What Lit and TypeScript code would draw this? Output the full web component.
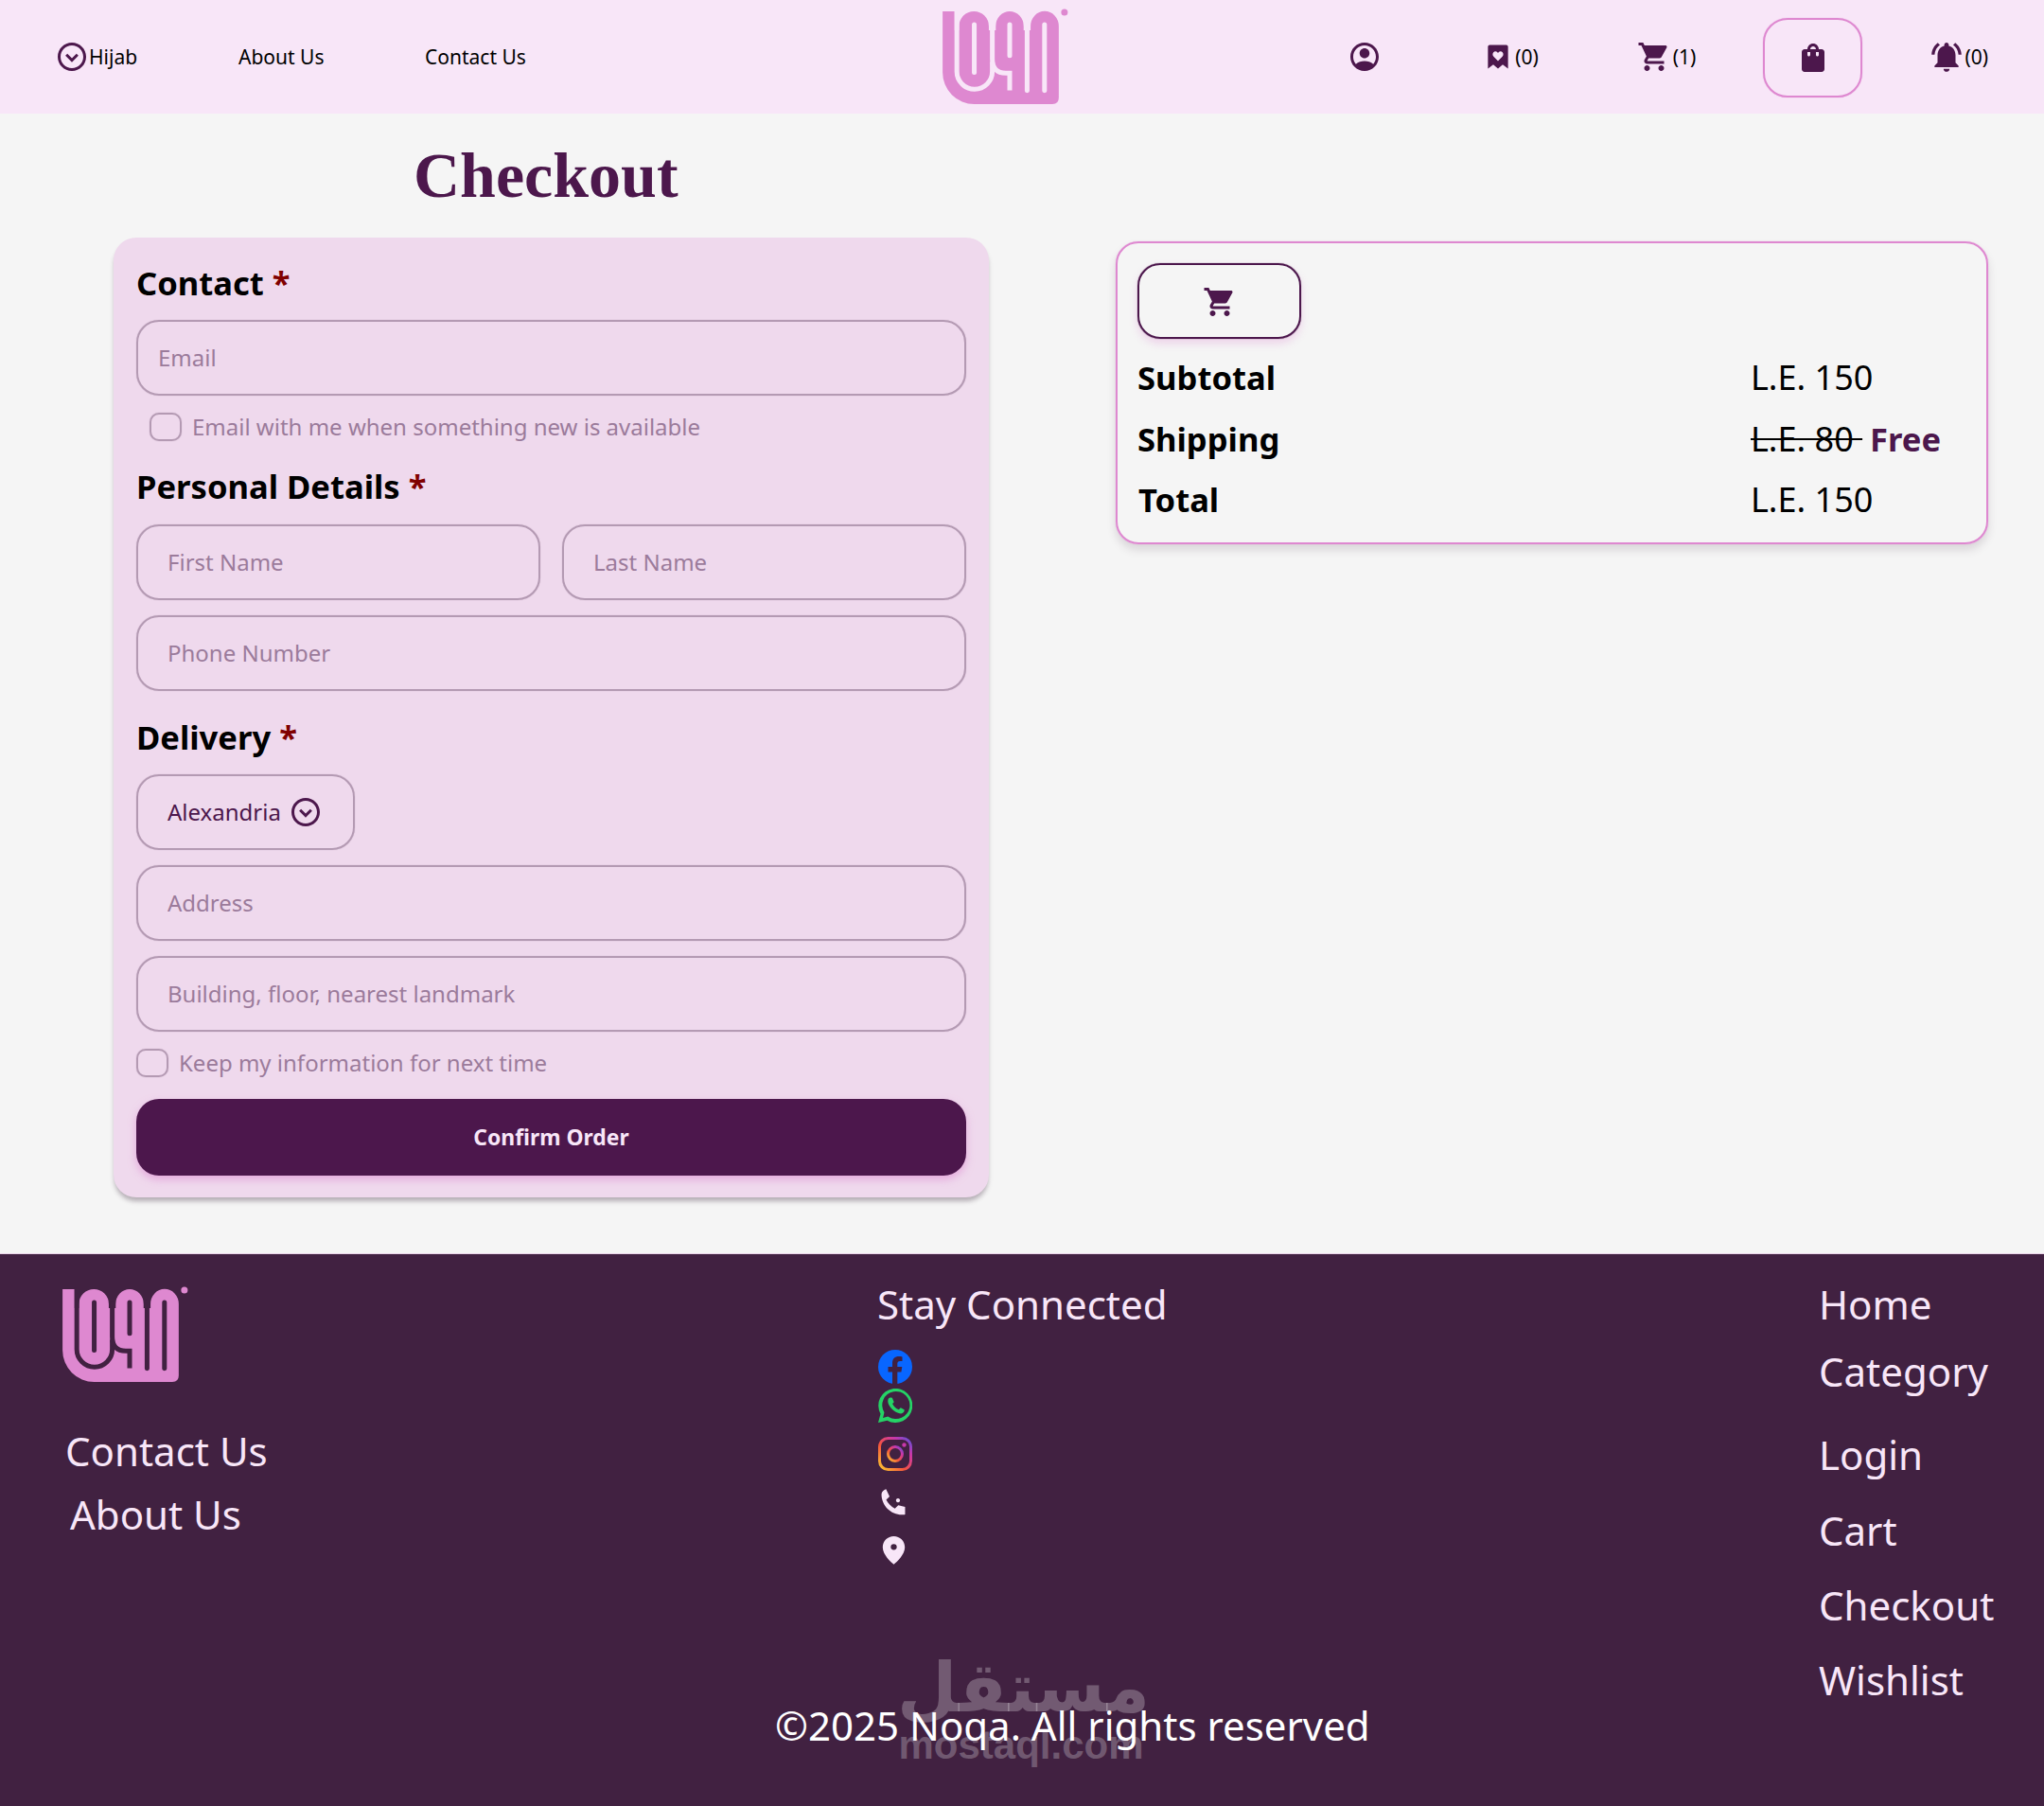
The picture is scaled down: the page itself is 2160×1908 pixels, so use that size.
import { LitElement, html, css, svg } from "lit";
import { customElement } from "lit/decorators.js";

const P = {
  cart: "M7 18c-1.1 0-1.99.9-1.99 2S5.9 22 7 22s2-.9 2-2-.9-2-2-2zM1 2v2h2l3.6 7.59-1.35 2.45c-.16.28-.25.61-.25.96 0 1.1.9 2 2 2h12v-2H7.42c-.14 0-.25-.11-.25-.25l.03-.12.9-1.63h7.45c.75 0 1.41-.41 1.75-1.03l3.58-6.49c.08-.14.12-.31.12-.48 0-.55-.45-1-1-1H5.21l-.94-2H1zm16 16c-1.1 0-1.99.9-1.99 2s.89 2 1.99 2 2-.9 2-2-.9-2-2-2z",
  bag: "M18 6h-2c0-2.21-1.79-4-4-4S8 3.79 8 6H6c-1.1 0-2 .9-2 2v12c0 1.1.9 2 2 2h12c1.1 0 2-.9 2-2V8c0-1.1-.9-2-2-2zm-8 4c0 .55-.45 1-1 1s-1-.45-1-1V8h2v2zm2-6c1.1 0 2 .9 2 2h-4c0-1.1.9-2 2-2zm4 6c0 .55-.45 1-1 1s-1-.45-1-1V8h2v2z",
  bell: "M7.58 4.08L6.15 2.65C3.75 4.48 2.17 7.3 2.03 10.5h2c.15-2.65 1.51-4.97 3.55-6.42zm12.39 6.42h2c-.15-3.2-1.73-6.02-4.12-7.85l-1.42 1.43c2.02 1.45 3.39 3.77 3.54 6.42zM18 11c0-3.07-1.64-5.64-4.5-6.32V4c0-.83-.67-1.5-1.5-1.5s-1.5.67-1.5 1.5v.68C7.63 5.36 6 7.92 6 11v5l-2 2v1h16v-1l-2-2v-5zm-6 11c.14 0 .27-.01.4-.04.65-.14 1.18-.58 1.44-1.18.1-.24.15-.5.15-.78h-4c.01 1.1.9 2 2.01 2z",
  user: "M12 2C6.48 2 2 6.48 2 12s4.48 10 10 10 10-4.48 10-10S17.52 2 12 2zM12 4c4.42 0 8 3.58 8 8 0 1.95-.7 3.73-1.86 5.12C16.45 15.8 14.32 15 12 15s-4.45.8-6.14 2.12C4.7 15.73 4 13.95 4 12c0-4.42 3.58-8 8-8zm0 2c-1.93 0-3.5 1.57-3.5 3.5S10.07 13 12 13s3.5-1.57 3.5-3.5S13.93 6 12 6z",
  mark: "M5 2h14c.83 0 1.5.67 1.5 1.5V22L16 18.500 12 22l-4-3.500L3.500 22V3.500C3.500 2.670 4.170 2 5 2zM12 15.500l3.700-3.800c1-1.100 1-2.700.1-3.600-.9-.9-2.400-.85-3.300.1L12 8.700l-.5-.5c-.9-.95-2.400-1-3.300-.1-.9.9-.9 2.500.1 3.600z",
  down: "M12 2C6.48 2 2 6.48 2 12s4.48 10 10 10 10-4.48 10-10S17.52 2 12 2zm0 18c-4.41 0-8-3.59-8-8s3.59-8 8-8 8 3.59 8 8-3.59 8-8 8zm0-4.2l-4.6-4.6L8.8 9.8l3.2 3.2 3.2-3.2 1.4 1.4z",
  phone: "M6.600 1.500C5 2 3.200 3.300 3.200 5.400c0 8.300 6.900 15.200 15.200 15.200.8 0 1.900 0 2.400-.2V14.800l-5.100-1.300-2.500 2.500c-2.800-1.400-5.100-3.700-6.500-6.500L9.200 7zM15.500 8.500a1.500 1.500 0 1 0 .01 0z",
  pin: "M12 1.500C7.300 1.500 3.500 5.200 3.500 10c0 5.500 6.200 11.300 8.500 13 2.300-1.700 8.500-7.500 8.500-13 0-4.800-3.800-8.500-8.500-8.500zm0 10.500a2.300 2.300 0 1 1 0-4.600 2.300 2.300 0 0 1 0 4.600z",
  wa: "M2 22l1.400-5.200A10 10 0 1 1 7.300 20.700zM4.800 19.200l3-.8.400.2A8.100 8.100 0 1 0 5.600 16zM9 7.300c-.4 0-1.300.5-1.300 2 0 2.800 3.600 6.500 6.900 7.300 1.400.3 2.500-.6 2.700-1.400.1-.4.1-.8 0-.9l-2.100-1.100-1.100 1.200c-1.700-.6-3-1.900-3.700-3.500l.9-1-1-2.400c-.1-.1-.7-.2-1.300-.2z",
};
const icon = (d: string, size = 30) => html`<svg class="ic" width=${size} height=${size} viewBox="0 0 24 24" fill="currentColor" fill-rule="evenodd"><path d=${d}></path></svg>`;

const logo = () => html`<svg class="logo" width="134" height="98" viewBox="0 0 400 293">
  <path class="lg-fill" d="M0 0H38V60H52V47A47 47 0 0 1 146 47V60H168V47A44 47 0 0 1 256 47V60H278V47A44 47 0 0 1 367 47V273Q367 293 347 293H100A100 100 0 0 1 0 193Z"></path>
  <g class="lg-slot" fill="none" stroke-width="15" stroke-linecap="round">
    ${svg`<path stroke-linecap="butt" d="M45 -5V190A56 56 0 0 0 157 190V160"></path>
    <path stroke-linecap="butt" d="M157 40V150Q157 195 200 195H212V250"></path><path d="M100 42V193"></path><path d="M212 42V140"></path>
    <path d="M267 40V250"></path><path d="M322 42V250"></path>`}
  </g>
  <circle class="lg-fill" cx="385" cy="3" r="10.500"></circle>
</svg>`;

@customElement("app-root")
export class AppRoot extends LitElement {
  static styles = css`
    :host { display: block; width: 2160px; font-family: "Noto Sans", sans-serif; background: #f5f5f5; color: #000; }
    * { box-sizing: border-box; }
    .ic { display: block; flex: none; color: #4c174c; }
    .logo { overflow: visible; }
    .lg-fill { fill: #de88d0; }
    .lg-slot { stroke: var(--slot); }
    header { --slot: #f8e6f8; height: 120px; background: #f8e6f8; display: flex; align-items: center; padding-left: 61px; font-size: 21px; }
    .nav { display: flex; align-items: center; }
    .hijab { display: flex; align-items: center; gap: 3px; width: 191px; }
    .about { width: 197px; }
    header .logo { margin-left: 440px; margin-top: 2px; }
    .tools { margin-left: auto; margin-right: 59px; display: flex; align-items: center; font-size: 21px; }
    .tool { display: flex; align-items: center; gap: 3px; }
    .t1 { margin-right: 108px; }
    .t2 { margin-right: 104px; }
    .t3 { margin-right: 71px; gap: 2px; }
    .t4 { width: 105px; height: 84px; margin-top: 2px; border: 2px solid #de88d0; box-shadow: 0 0 1px #de88d0; border-radius: 26px; justify-content: center; margin-right: 70px; }
    .t5 { gap: 0; }
    main { display: flex; padding: 0 59px 59px 120px; gap: 134px; align-items: flex-start; }
    .left { width: 925px; flex: none; }
    h1 { margin: 25px 0 26px; padding-left: 317px; font: bold 68px/80px "Liberation Serif", serif; color: #4c174c; }
    .card { background: #efd9ed; border-radius: 24px; padding: 24px 24px 23px; box-shadow: 0 5px 5px -1px rgba(60, 40, 60, .35); }
    h2 { margin: 0 0 13px; font: bold 34.6px/48px "Noto Sans", sans-serif; padding-bottom: 2px; }
    h2 span { color: #800000; }
    .h-personal { margin-top: 24px; margin-bottom: 14px; }
    .h-delivery { margin-top: 25px; }
    .field { display: block; width: 100%; height: 80px; border: 2px solid #b49ab3; box-shadow: 0 0 1px #b49ab3; border-radius: 24px; background: transparent; font: 24px "Noto Sans", sans-serif; padding: 0 31px 1px; outline: none; color: #4c174c; }
    .field::placeholder { color: #9b7b9b; opacity: 1; }
    .email { padding-left: 21px; }
    .row2 { display: flex; gap: 23px; }
    .stack { margin-top: 16px; }
    .check { display: flex; align-items: center; gap: 11px; height: 30px; margin-top: 18px; font-size: 24px; color: #9b7b9b; white-space: nowrap; }
    .check span { position: relative; top: -1px; }
    .check.ind { padding-left: 14px; }
    .box { width: 34px; height: 30px; border: 2px solid #b49ab3; box-shadow: 0 0 1px #b49ab3; border-radius: 10px; flex: none; }
    .select { display: flex; align-items: center; gap: 8px; width: 231px; height: 80px; border: 2px solid #b49ab3; box-shadow: 0 0 1px #b49ab3; border-radius: 24px; padding: 0 0 1px 31px; font-size: 24px; color: #4c174c; }
    .confirm { display: block; width: 100%; height: 81px; margin-top: 23px; background: #4c174c; color: #f8e6f8; border: 0; border-radius: 24px; font: bold 22.9px "Noto Sans", sans-serif; box-shadow: 0 4px 8px rgba(222, 136, 208, .6); }
    .summary { width: 922px; flex: none; margin-top: 135px; height: 320px; border: 2px solid #de88d0; border-radius: 24px; padding: 21px; box-shadow: 0 0 1px #de88d0, 0 6px 10px rgba(60, 40, 60, .15); }
    .cartbtn { width: 173px; height: 80px; border: 2px solid #4c174c; border-radius: 24px; display: flex; align-items: center; justify-content: center; padding-top: 2px; box-shadow: 0 0 1px #4c174c, 0 5px 8px rgba(222, 136, 208, .3); margin-bottom: 9px; }
    .line { display: flex; height: 64.600px; line-height: 64.600px; font-size: 36px; }
    .line b { width: 648px; font-size: 34.6px; }
    .ship b:last-child { width: auto; color: #4c174c; margin-left: 8px; }
    .line s { text-decoration-thickness: 2px; }
    .tot b { padding-left: 1px; }
    footer { --slot: #412141; position: relative; background: #412141; border-top: 1px solid #e9d3e8; height: 584px; padding-top: 25px; color: #f8e6f8; font-size: 42px; line-height: 56px; }
    .cols { display: flex; height: 445px; }
    .c1 { width: 927px; flex: none; padding-left: 66px; padding-top: 12px; }
    .c1 .logo { display: block; margin-bottom: 45px; }
    .c1 div { margin-left: 3px; }
    .c1 div + div { margin-left: 8px; margin-top: 11px; }
    .c2 { width: 995px; flex: none; }
    .soc { display: flex; flex-direction: column; align-items: flex-start; margin-top: 20px; }
    .soc svg { display: block; }
    .s1 { margin-left: 1px; }
    .s2 { margin-top: 5px; margin-left: 1px; }
    .s3 { margin-top: 15px; margin-left: 1px; }
    .s4 { margin-top: 17px; }
    .s5 { margin-top: 16px; margin-left: 1px; }
    .soc .light { color: #f8e6f8; }
    .soc .wa { color: #25d366; }
    .c3 a { display: block; margin-top: 23px; }
    .c3 a:first-child { margin-top: 0; }
    .c3 a:nth-child(2) { margin-top: 15px; }
    .c3 a:nth-child(3) { margin-top: 32px; }
    .c3 a:nth-child(4) { margin-top: 24px; }
    .copy { position: relative; padding-left: 819px; color: #fff; line-height: 56px; white-space: nowrap; }
    .wm { position: absolute; left: 948px; top: 418px; width: 262px; color: rgba(255, 255, 255, .26); }
    .wm .ar { font: bold 73px/80px "DejaVu Sans", sans-serif; white-space: nowrap; text-align: left; }
    .wm .en { font: bold 42px/42px "Liberation Sans", sans-serif; white-space: nowrap; text-align: center; }
  `;

  render() {
    return html`
      <header>
        <div class="nav">
          <div class="hijab"><svg class="ic" width="30" height="30" viewBox="2 2 20 20" fill="currentColor" fill-rule="evenodd"><path d=${P.down}></path></svg><span>Hijab</span></div>
          <div class="about">About Us</div>
          <div>Contact Us</div>
        </div>
        ${logo()}
        <div class="tools">
          <div class="tool t1">${icon(P.user, 36)}</div>
          <div class="tool t2">${icon(P.mark, 30)}<span>(0)</span></div>
          <div class="tool t3">${icon(P.cart, 36)}<span>(1)</span></div>
          <div class="tool t4">${icon(P.bag, 36)}</div>
          <div class="tool t5">${icon(P.bell, 38)}<span>(0)</span></div>
        </div>
      </header>
      <main>
        <div class="left">
          <h1>Checkout</h1>
          <form class="card">
            <h2>Contact <span>*</span></h2>
            <input class="field email" placeholder="Email" />
            <div class="check ind"><i class="box"></i><span>Email with me when something new is available</span></div>
            <h2 class="h-personal">Personal Details <span>*</span></h2>
            <div class="row2"><input class="field" placeholder="First Name" /><input class="field" placeholder="Last Name" /></div>
            <input class="field stack" placeholder="Phone Number" />
            <h2 class="h-delivery">Delivery <span>*</span></h2>
            <div class="select"><span>Alexandria</span>${icon(P.down, 36)}</div>
            <input class="field stack" placeholder="Address" />
            <input class="field stack" placeholder="Building, floor, nearest landmark" />
            <div class="check"><i class="box"></i><span>Keep my information for next time</span></div>
            <button class="confirm" type="button">Confirm Order</button>
          </form>
        </div>
        <aside class="summary">
          <div class="cartbtn">${icon(P.cart, 36)}</div>
          <div class="line"><b>Subtotal</b><span>L.E. 150</span></div>
          <div class="line ship"><b>Shipping</b><s>L.E. 80&nbsp;</s><b>Free</b></div>
          <div class="line tot"><b>Total</b><span>L.E. 150</span></div>
        </aside>
      </main>
      <footer>
        <div class="wm"><div class="ar">مستقل</div><div class="en">mostaql.com</div></div>
        <div class="cols">
          <div class="c1">${logo()}<div>Contact Us</div><div>About Us</div></div>
          <div class="c2">
            <div>Stay Connected</div>
            <div class="soc">
              <svg class="s1" width="36" height="36" viewBox="0 0 36 36"><circle cx="18" cy="18" r="18" fill="#0866ff"></circle><path fill="#412141" d="M15 36V23.500H10.500V18H15V14C15 9.500 17.700 7 21.800 7c1.400 0 2.800.2 3.700.4v4.600h-2.300c-2.200 0-2.900 1.300-2.900 2.800V18h5l-.9 5.500h-4.100V36z"></path></svg>
              <svg class="s2 ic wa" width="36" height="36" viewBox="2 2 20 20" fill="currentColor" fill-rule="evenodd"><path d=${P.wa}></path></svg>
              <svg class="s3" width="36" height="36" viewBox="0 0 36 36" fill="none"><defs><linearGradient id="ig" x1="0" y1="1" x2="1" y2="0"><stop offset="0" stop-color="#fdc830"></stop><stop offset=".4" stop-color="#f5533d"></stop><stop offset=".75" stop-color="#c837ab"></stop><stop offset="1" stop-color="#5b51d8"></stop></linearGradient></defs><rect x="1.500" y="1.500" width="33" height="33" rx="9" stroke="url(#ig)" stroke-width="3"></rect><circle cx="18" cy="18" r="7.500" stroke="url(#ig)" stroke-width="3"></circle><circle cx="27.500" cy="8.500" r="2.200" fill="#c837ab"></circle></svg>
              <svg class="s4 ic light" width="34" height="34" viewBox="0 0 24 24" fill="currentColor" fill-rule="evenodd"><path d=${P.phone}></path></svg>
              <svg class="s5 ic light" width="33" height="33" viewBox="0 0 24 24" fill="currentColor" fill-rule="evenodd"><path d=${P.pin}></path></svg>
            </div>
          </div>
          <div class="c3"><a>Home</a><a>Category</a><a>Login</a><a>Cart</a><a>Checkout</a><a>Wishlist</a></div>
        </div>
        <div class="copy">©2025 Noqa. All rights reserved</div>
      </footer>
    `;
  }
}
